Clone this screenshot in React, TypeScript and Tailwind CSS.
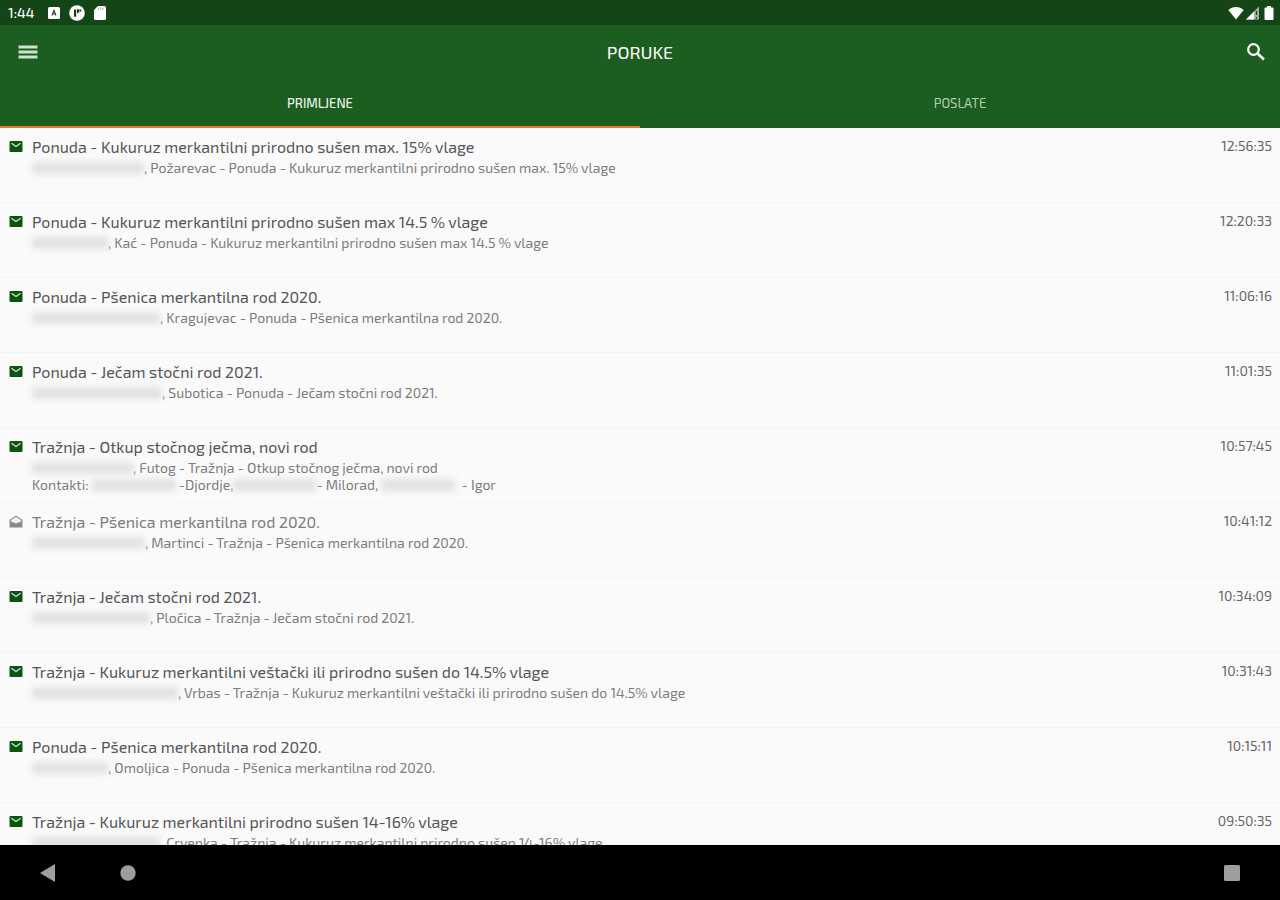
import clsx from 'clsx'
import { useState } from 'react'

type Part = string | number

interface Message {
  id: number
  title: string
  // numbers are widths of hidden (blurred) names and phone numbers
  lines: Part[][]
  time: string
  read?: boolean
}

const messages: Message[] = [
  { id: 1, title: 'Ponuda - Kukuruz merkantilni prirodno sušen max. 15% vlage', lines: [[112, ', Požarevac - Ponuda - Kukuruz merkantilni prirodno sušen max. 15% vlage']], time: '12:56:35' },
  { id: 2, title: 'Ponuda - Kukuruz merkantilni prirodno sušen max 14.5 % vlage', lines: [[76, ', Kać - Ponuda - Kukuruz merkantilni prirodno sušen max 14.5 % vlage']], time: '12:20:33' },
  { id: 3, title: 'Ponuda - Pšenica merkantilna rod 2020.', lines: [[128, ', Kragujevac - Ponuda - Pšenica merkantilna rod 2020.']], time: '11:06:16' },
  { id: 4, title: 'Ponuda - Ječam stočni rod 2021.', lines: [[130, ', Subotica - Ponuda - Ječam stočni rod 2021.']], time: '11:01:35' },
  {
    id: 5,
    title: 'Tražnja - Otkup stočnog ječma, novi rod',
    lines: [
      [101, ', Futog - Tražnja - Otkup stočnog ječma, novi rod'],
      ['Kontakti: ', 84, ' -Djordje,', 83, '- Milorad, ', 74, '  - Igor'],
    ],
    time: '10:57:45',
  },
  { id: 6, title: 'Tražnja - Pšenica merkantilna rod 2020.', lines: [[113, ', Martinci - Tražnja - Pšenica merkantilna rod 2020.']], time: '10:41:12', read: true },
  { id: 7, title: 'Tražnja - Ječam stočni rod 2021.', lines: [[118, ', Pločica - Tražnja - Ječam stočni rod 2021.']], time: '10:34:09' },
  { id: 8, title: 'Tražnja - Kukuruz merkantilni veštački ili prirodno sušen do 14.5% vlage', lines: [[146, ', Vrbas - Tražnja - Kukuruz merkantilni veštački ili prirodno sušen do 14.5% vlage']], time: '10:31:43' },
  { id: 9, title: 'Ponuda - Pšenica merkantilna rod 2020.', lines: [[76, ', Omoljica - Ponuda - Pšenica merkantilna rod 2020.']], time: '10:15:11' },
  { id: 10, title: 'Tražnja - Kukuruz merkantilni prirodno sušen 14-16% vlage', lines: [[128, ', Crvenka - Tražnja - Kukuruz merkantilni prirodno sušen 14-16% vlage']], time: '09:50:35' },
]

const tabs = ['PRIMLJENE', 'POSLATE']

function StatusBar() {
  return (
    <div className="flex h-[25px] shrink-0 items-center bg-[#144517] px-2 text-white">
      <span className="text-sm font-medium">1:44</span>
      <div className="ml-[13px] flex items-center gap-2">
        <svg width="14" height="14" viewBox="0 0 14 14">
          <rect x="1" y="1" width="12" height="12" rx="1.5" fill="#fff" />
          <path d="M5 9.5 7 4.5l2 5M5.8 8h2.4" fill="none" stroke="#144517" strokeWidth="1.1" />
        </svg>
        <svg width="16" height="16" viewBox="0 0 16 16">
          <circle cx="8" cy="8" r="7.8" fill="#fff" />
          <path d="M5 4.5h2.2v7.2H5zM8 4.2h2.2v3.2L8 8.2z" fill="#144517" />
          <circle cx="11.4" cy="5.6" r="1.1" fill="#144517" />
        </svg>
        <svg width="14" height="16" viewBox="0 0 14 16">
          <path d="M5 1h6.5A1.5 1.5 0 0 1 13 2.5v11a1.5 1.5 0 0 1-1.5 1.5h-9A1.5 1.5 0 0 1 1 13.5V5z" fill="#fff" />
          <path d="M5.5 2.5V5M7.8 2.5V5M10 2.5V5" stroke="#144517" strokeWidth=".8" opacity=".5" />
        </svg>
      </div>
      <div className="ml-auto flex items-center gap-0.5">
        <svg width="16" height="14" viewBox="0 0 16 14">
          <path d="M8 13.5.3 4C4.5.1 11.5.1 15.7 4z" fill="#fff" />
        </svg>
        <svg width="14" height="14" viewBox="0 0 14 14">
          <path d="M13 .5v13H0z" fill="#fff" opacity=".6" />
          <path d="M8 5.5v8H0z" fill="#fff" />
          <path d="M10.5 5v4M10.5 11v1.5" stroke="#144517" strokeWidth="1.2" />
        </svg>
        <svg width="14" height="14" viewBox="0 0 14 14" className="-mr-1">
          <path d="M5 0h4v1.5h1.5q1 0 1 1V13q0 1-1 1h-7q-1 0-1-1V2.5q0-1 1-1H5z" fill="#fff" />
        </svg>
      </div>
    </div>
  )
}

function MailIcon({ read }: { read?: boolean }) {
  if (read) {
    return (
      <svg width="14" height="14" viewBox="0 0 14 14" className="shrink-0">
        <path d="M.5 5 7 .5 13.5 5v7.5H.5z" fill="#8a8a8a" />
        <path d="M2 5.2 7 1.8l5 3.4v1.3l-5 2-5-2z" fill="#f4f4f4" />
      </svg>
    )
  }
  return (
    <svg width="14" height="14" viewBox="0 0 14 14" className="shrink-0">
      <rect x=".5" y="1" width="13" height="11" rx="1" fill="#0b5410" />
      <path d="M2.5 3.2 7 6.5l4.5-3.3" fill="none" stroke="#d3e3d3" strokeWidth="1.3" />
    </svg>
  )
}

function MessageRow({ message }: { message: Message }) {
  return (
    <li className="border-b border-[#f4f4f4]">
      <a href={`#poruka-${message.id}`} className="flex min-h-[74px] items-start pt-[9px] pr-2 pb-1 pl-[9px]">
        <div className="flex h-5 items-center">
          <MailIcon read={message.read} />
        </div>
        <div className="ml-[9px] min-w-0 flex-1">
          <h2 className={clsx('truncate text-base leading-5', message.read ? 'text-[#7c7c7c]' : 'text-[#555555]')}>
            {message.title}
          </h2>
          <div className="mt-0.5 text-sm leading-[17px] text-[#7c7c7c]">
            {message.lines.map((line, i) => (
              <p key={i} className="flex items-center whitespace-pre">
                {line.map((part, j) =>
                  typeof part === 'number' ? (
                    <span key={j} className="h-3 shrink-0 bg-[#e2e2e2] blur-[3px]" style={{ width: part }} />
                  ) : (
                    <span key={j}>{part}</span>
                  )
                )}
              </p>
            ))}
          </div>
        </div>
        <time className="ml-4 text-sm leading-[18px] text-[#666666]">{message.time}</time>
      </a>
    </li>
  )
}

export default function App() {
  const [activeTab, setActiveTab] = useState(0)

  return (
    <div className="flex h-screen flex-col overflow-hidden bg-[#fafafa] font-['Exo_2','Noto_Sans',sans-serif]">
      <StatusBar />

      {/* Toolbar */}
      <header className="shrink-0 bg-[#1b5e1f] text-white">
        <div className="flex h-[54px] items-center justify-between px-3">
          <button aria-label="Meni" className="flex size-8 items-center justify-center">
            <svg width="20" height="16" viewBox="0 0 20 16">
              <path d="M.5 3h19M.5 8h19M.5 13h19" stroke="#cfdfcf" strokeWidth="3" />
            </svg>
          </button>
          <h1 className="text-lg leading-6">PORUKE</h1>
          <button aria-label="Pretraga" className="flex size-8 items-center justify-end pr-0.5">
            <svg width="20" height="20" viewBox="0 0 20 20">
              <circle cx="7.5" cy="7.5" r="5.3" fill="none" stroke="#fff" strokeWidth="2.2" />
              <path d="m11.5 11.5 6.5 6" stroke="#fff" strokeWidth="2.6" />
            </svg>
          </button>
        </div>
        <div role="tablist" className="flex h-[49px]">
          {tabs.map((tab, index) => (
            <button
              key={tab}
              role="tab"
              aria-selected={activeTab === index}
              onClick={() => setActiveTab(index)}
              className={clsx(
                'flex-1 border-b-2 pt-[3px] text-[13px]',
                activeTab === index ? 'border-[#e8792b] font-medium text-[#eef4ee]' : 'border-[#1b5e1f] text-[#b4cbb5]'
              )}
            >
              {tab}
            </button>
          ))}
        </div>
      </header>

      {/* Messages */}
      <main className="min-h-0 flex-1 overflow-y-auto [scrollbar-width:none]">
        <ul>
          {messages.map(message => (
            <MessageRow key={message.id} message={message} />
          ))}
        </ul>
      </main>

      {/* Android navigation */}
      <nav className="flex h-[55px] shrink-0 items-center bg-black px-9">
        <button aria-label="Nazad" className="flex size-6 items-center justify-center">
          <svg width="16" height="20" viewBox="0 0 16 20">
            <path d="M15 1v18L0 10z" fill="#9e9e9e" />
          </svg>
        </button>
        <button aria-label="Početna" className="ml-14 flex size-6 items-center justify-center">
          <svg width="16" height="16" viewBox="0 0 16 16">
            <circle cx="8" cy="8" r="7.7" fill="#9e9e9e" />
          </svg>
        </button>
        <button aria-label="Nedavno" className="ml-auto flex size-6 items-center justify-center">
          <svg width="16" height="16" viewBox="0 0 16 16">
            <rect width="16" height="16" rx="1.5" fill="#9e9e9e" />
          </svg>
        </button>
      </nav>
    </div>
  )
}
